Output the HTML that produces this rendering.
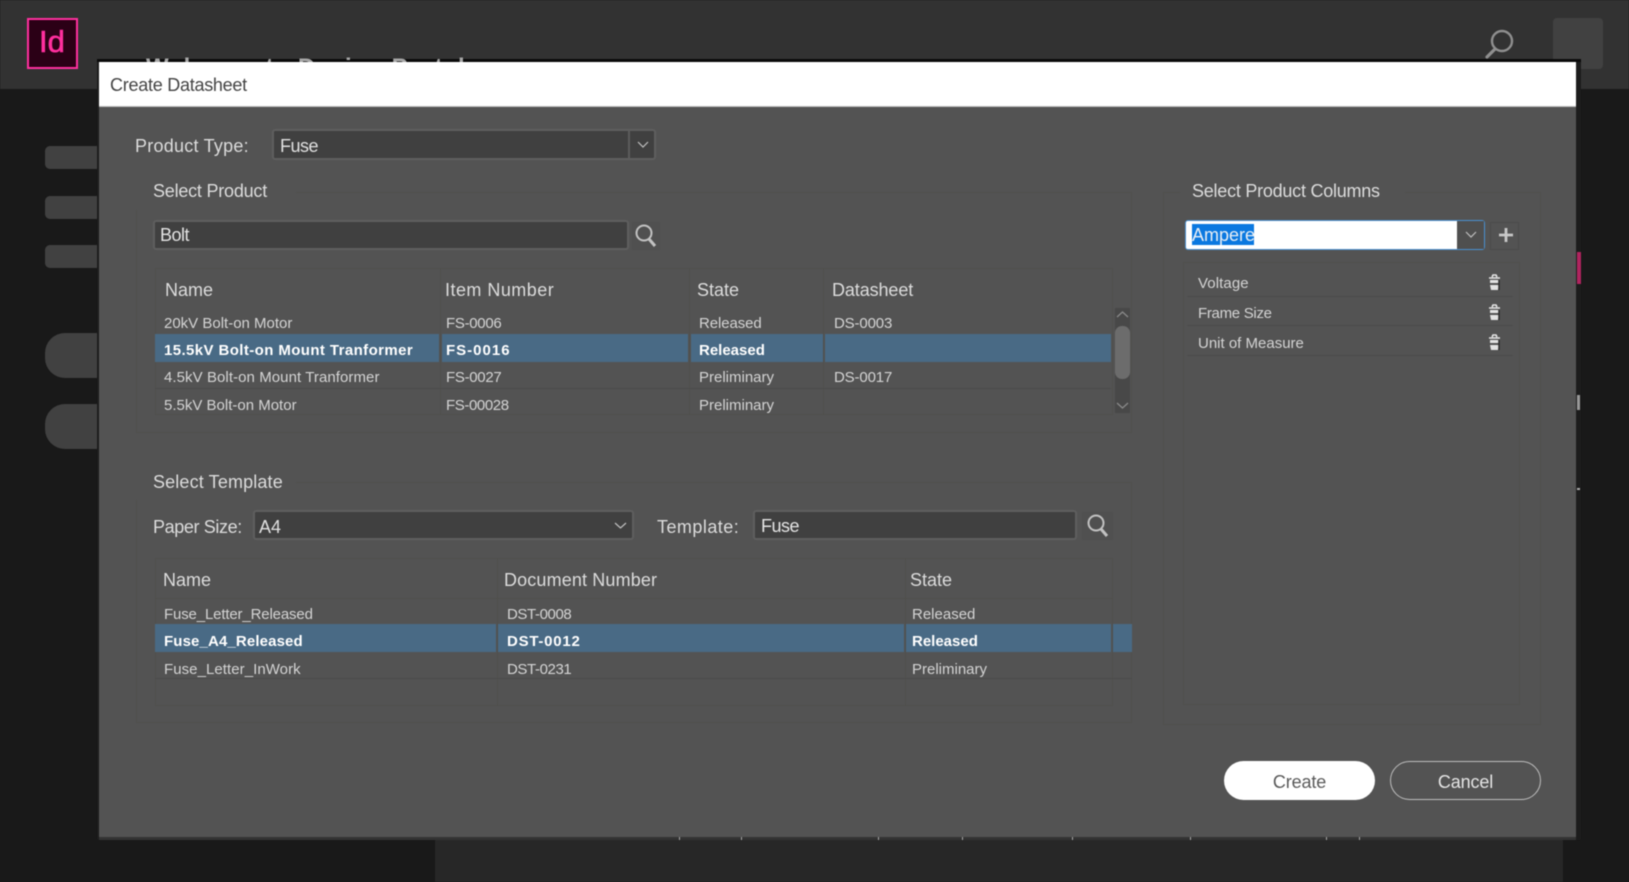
<!DOCTYPE html>
<html>
<head>
<meta charset="utf-8">
<style>
html,body{margin:0;padding:0;width:1629px;height:882px;overflow:hidden;background:#191919}
body{position:relative;font-family:"Liberation Sans",sans-serif}
#wrap{position:absolute;left:0;top:0;width:1629px;height:882px;overflow:hidden;filter:blur(.4px)}
.b{position:absolute;box-sizing:border-box}
.t{position:absolute;white-space:nowrap;height:24px;line-height:24px;color:#dcdcdc;font-size:18px;transform-origin:left center}
.s{font-size:15px;color:#d4d4d4}
.w{font-size:15px;font-weight:bold;color:#fff}
.sel{position:absolute;height:28px;background:#496a85}
.input{position:absolute;box-sizing:border-box;background:#404040;border:2px solid #5e5e5e;border-radius:3px;height:30px}
.ln{position:absolute;height:1px;background:#4b4b4b}
.v{position:absolute;width:1px;background:#4f4f4c}
.g{position:absolute;box-sizing:border-box;border:1px solid #50504d}
.k{position:absolute;top:837px;width:1px;height:3px;background:#aaa}
svg{position:absolute;overflow:visible}
</style>
</head>
<body>
<div id="wrap">
<!-- background -->
<div class="b" style="left:0;top:0;width:1629px;height:89px;background:#323232"></div>
<div class="b" style="left:435px;top:838px;width:1128px;height:44px;background:#272727"></div>
<div class="b" style="left:27px;top:18px;width:51px;height:51px;background:#2b0016;border:2px solid #ff2f9e"></div>
<div class="t" style="left:39px;top:30px;font-size:31px;color:#ff2f9e;-webkit-text-stroke:.6px #ff2f9e">Id</div>
<svg style="left:0;top:0" width="1629" height="100"><circle cx="1502" cy="41" r="10" fill="none" stroke="#8f8f8f" stroke-width="2.4"/><path d="M1495 49L1487 57" stroke="#8f8f8f" stroke-width="3.2" stroke-linecap="round"/></svg>
<div class="b" style="left:1553px;top:18px;width:50px;height:51px;background:#414141;border-radius:4px"></div>
<div class="b" style="left:45px;top:146px;width:60px;height:23px;background:#414141;border-radius:5px"></div>
<div class="b" style="left:45px;top:196px;width:60px;height:23px;background:#414141;border-radius:5px"></div>
<div class="b" style="left:45px;top:245px;width:60px;height:23px;background:#414141;border-radius:5px"></div>
<div class="b" style="left:45px;top:333px;width:60px;height:45px;background:#414141;border-radius:20px 0 0 20px"></div>
<div class="b" style="left:45px;top:404px;width:60px;height:45px;background:#414141;border-radius:20px 0 0 20px"></div>
<!-- dialog shell -->
<div class="b" style="left:97px;top:60px;width:1484px;height:780px;background:#1c1c1c"></div>
<div class="b" style="left:97px;top:59px;width:1484px;height:3px;background:#0a0a0a"></div>
<div class="t" style="left:146px;top:56px;font-size:24px;font-weight:bold;color:#a8a8a8;letter-spacing:1px">Welcome to Design Portal</div>
<div class="b" style="left:1577px;top:252px;width:4px;height:32px;background:#b0245f"></div>
<div class="b" style="left:1577px;top:395px;width:3px;height:15px;background:#999"></div>
<div class="b" style="left:1577px;top:488px;width:3px;height:2px;background:#aaa"></div>
<div class="b" style="left:99px;top:833px;width:1477px;height:7px;background:#333"></div>
<div class="b" style="left:99px;top:62px;width:1477px;height:775px;background:#535353"></div>
<div class="b" style="left:99px;top:62px;width:1477px;height:45px;background:#fff;border-bottom:1px solid #bbb"></div>
<div class="t" style="left:110px;top:73px;color:#444;font-size:18px;letter-spacing:-.26px">Create Datasheet</div>
<div class="k" style="left:679px"></div><div class="k" style="left:741px"></div><div class="k" style="left:878px"></div><div class="k" style="left:962px"></div><div class="k" style="left:1072px"></div><div class="k" style="left:1190px"></div><div class="k" style="left:1326px"></div><div class="k" style="left:1359px"></div>

<!-- group boxes -->
<div class="g" style="left:136px;top:192px;width:996px;height:241px"></div>
<div class="g" style="left:136px;top:482px;width:996px;height:241px"></div>
<div class="g" style="left:1163px;top:192px;width:378px;height:533px"></div>
<div class="g" style="left:155px;top:268px;width:958px;height:147px"></div>
<div class="g" style="left:155px;top:558px;width:958px;height:148px"></div>
<div class="g" style="left:1183px;top:262px;width:337px;height:443px"></div>
<div class="b" style="left:136px;top:170px;width:160px;height:40px;background:#535353"></div>
<div class="b" style="left:136px;top:470px;width:160px;height:30px;background:#535353"></div>
<div class="b" style="left:1180px;top:170px;width:225px;height:40px;background:#535353"></div>

<!-- product type -->
<div class="t" style="left:135px;top:134px;letter-spacing:.24px">Product Type:</div>
<div class="input" style="left:272px;top:129px;width:384px;height:31px"></div>
<div class="b" style="left:628px;top:131px;width:2px;height:27px;background:#5c5c5c"></div>
<div class="t" style="left:280px;top:134px;color:#e0e0e0;letter-spacing:-.5px">Fuse</div>
<svg style="left:637px;top:141px" width="12" height="7"><path d="M1 1L6 6L11 1" fill="none" stroke="#c0c0c0" stroke-width="1.2"/></svg>

<!-- select product -->
<div class="t" style="left:153px;top:179px;letter-spacing:-.22px">Select Product</div>
<div class="input" style="left:153px;top:220px;width:476px"></div>
<div class="t" style="left:160px;top:223px;color:#e4e4e4;letter-spacing:-.5px">Bolt</div>
<div class="b" style="left:632px;top:222px;width:28px;height:28px;background:#505050"></div>
<svg style="left:632px;top:222px" width="28" height="28"><circle cx="12" cy="11" r="7.5" fill="none" stroke="#c2c2c2" stroke-width="2"/><path d="M17 17L23 24" stroke="#c2c2c2" stroke-width="3"/></svg>

<!-- table 1 -->
<div class="v" style="left:440px;top:268px;height:147px"></div>
<div class="v" style="left:689px;top:268px;height:147px"></div>
<div class="v" style="left:823px;top:268px;height:147px"></div>
<div class="t" style="left:165px;top:278px">Name</div>
<div class="t" style="left:445px;top:278px;letter-spacing:.47px">Item Number</div>
<div class="t" style="left:697px;top:278px">State</div>
<div class="t" style="left:832px;top:278px;letter-spacing:-.1px">Datasheet</div>
<div class="sel" style="left:155px;top:334px;width:284px"></div>
<div class="sel" style="left:442px;top:334px;width:246px"></div>
<div class="sel" style="left:691px;top:334px;width:132px"></div>
<div class="sel" style="left:825px;top:334px;width:286px"></div>
<div class="ln" style="left:155px;top:388px;width:956px"></div>
<div class="ln" style="left:155px;top:414px;width:956px;background:#4f4f4c"></div>

<div class="t s" style="left:164px;top:312px">20kV Bolt-on Motor</div>
<div class="t s" style="left:446px;top:312px;letter-spacing:-.3px">FS-0006</div>
<div class="t s" style="left:699px;top:312px;letter-spacing:-.1px">Released</div>
<div class="t s" style="left:834px;top:312px;letter-spacing:-.15px">DS-0003</div>
<div class="t w" style="left:164px;top:339px;letter-spacing:.4px">15.5kV Bolt-on Mount Tranformer</div>
<div class="t w" style="left:446px;top:339px;letter-spacing:1px">FS-0016</div>
<div class="t w" style="left:699px;top:339px">Released</div>
<div class="t s" style="left:164px;top:366px;letter-spacing:.07px">4.5kV Bolt-on Mount Tranformer</div>
<div class="t s" style="left:446px;top:366px;letter-spacing:-.3px">FS-0027</div>
<div class="t s" style="left:699px;top:366px">Preliminary</div>
<div class="t s" style="left:834px;top:366px;letter-spacing:-.15px">DS-0017</div>
<div class="t s" style="left:164px;top:394px">5.5kV Bolt-on Motor</div>
<div class="t s" style="left:446px;top:394px;letter-spacing:-.4px">FS-00028</div>
<div class="t s" style="left:699px;top:394px">Preliminary</div>

<!-- scrollbar -->
<div class="b" style="left:1115px;top:308px;width:15px;height:105px;background:#484848"></div>
<div class="b" style="left:1115px;top:326px;width:15px;height:53px;background:#6c6c6c;border-radius:7px"></div>
<svg style="left:1116px;top:311px" width="13" height="8"><path d="M1 6L6.5 1L12 6" fill="none" stroke="#8a8a8a" stroke-width="1.3"/></svg>
<svg style="left:1116px;top:402px" width="13" height="8"><path d="M1 1L6.5 6L12 1" fill="none" stroke="#8a8a8a" stroke-width="1.3"/></svg>

<!-- select template -->
<div class="t" style="left:153px;top:470px;letter-spacing:.14px">Select Template</div>
<div class="t" style="left:153px;top:515px;letter-spacing:-.38px">Paper Size:</div>
<div class="input" style="left:253px;top:510px;width:381px"></div>
<div class="t" style="left:259px;top:515px;color:#e0e0e0">A4</div>
<svg style="left:614px;top:522px" width="13" height="7"><path d="M1 1L6.5 6L12 1" fill="none" stroke="#c0c0c0" stroke-width="1.2"/></svg>
<div class="t" style="left:657px;top:515px;letter-spacing:.46px">Template:</div>
<div class="input" style="left:753px;top:510px;width:324px"></div>
<div class="t" style="left:761px;top:514px;color:#e4e4e4;letter-spacing:-.5px">Fuse</div>
<div class="b" style="left:1082px;top:512px;width:31px;height:28px;background:#505050"></div>
<svg style="left:1085px;top:512px" width="28" height="28"><circle cx="11" cy="11" r="7.5" fill="none" stroke="#c2c2c2" stroke-width="2"/><path d="M16 17L22 24" stroke="#c2c2c2" stroke-width="3"/></svg>

<!-- table 2 -->
<div class="v" style="left:497px;top:558px;height:148px"></div>
<div class="v" style="left:905px;top:558px;height:148px"></div>
<div class="v" style="left:1112px;top:558px;height:148px"></div>
<div class="ln" style="left:155px;top:598px;width:958px;background:#4f4f4c"></div>
<div class="t" style="left:163px;top:568px">Name</div>
<div class="t" style="left:504px;top:568px;letter-spacing:.14px">Document Number</div>
<div class="t" style="left:910px;top:568px">State</div>
<div class="sel" style="left:155px;top:624px;width:341px"></div>
<div class="sel" style="left:498px;top:624px;width:406px"></div>
<div class="sel" style="left:906px;top:624px;width:205px"></div>
<div class="sel" style="left:1113px;top:624px;width:19px"></div>
<div class="ln" style="left:155px;top:678px;width:977px"></div>
<div class="t s" style="left:164px;top:603px;letter-spacing:-.15px">Fuse_Letter_Released</div>
<div class="t s" style="left:507px;top:603px;letter-spacing:-.4px">DST-0008</div>
<div class="t s" style="left:912px;top:603px">Released</div>
<div class="t w" style="left:164px;top:630px;letter-spacing:.13px">Fuse_A4_Released</div>
<div class="t w" style="left:507px;top:630px;letter-spacing:.75px">DST-0012</div>
<div class="t w" style="left:912px;top:630px">Released</div>
<div class="t s" style="left:164px;top:658px;letter-spacing:.06px">Fuse_Letter_InWork</div>
<div class="t s" style="left:507px;top:658px;letter-spacing:-.4px">DST-0231</div>
<div class="t s" style="left:912px;top:658px">Preliminary</div>

<!-- right panel -->
<div class="t" style="left:1192px;top:179px;letter-spacing:-.24px">Select Product Columns</div>
<div class="b" style="left:1185px;top:220px;width:300px;height:30px;background:#fff;border:1px solid #4a90d0;border-radius:3px"></div>
<div class="b" style="left:1457px;top:221px;width:27px;height:28px;background:#4f4f4f"></div>
<svg style="left:1465px;top:231px" width="12" height="7"><path d="M1 1L6 6L11 1" fill="none" stroke="#c0c0c0" stroke-width="1.2"/></svg>
<div class="b" style="left:1192px;top:224px;width:62px;height:21px;background:#0a78e0"></div>
<div class="t" style="left:1192px;top:223px;color:#e8eef5">Ampere</div>
<div class="b" style="left:1490px;top:222px;width:29px;height:28px;border:1px solid #4b4b4b"></div>
<svg style="left:1499px;top:228px" width="14" height="14"><path d="M7 0V14M0 7H14" stroke="#c8c8c8" stroke-width="2.8"/></svg>
<div class="t s" style="left:1198px;top:272px;letter-spacing:.1px">Voltage</div>
<div class="t s" style="left:1198px;top:302px;letter-spacing:-.3px">Frame Size</div>
<div class="t s" style="left:1198px;top:332px">Unit of Measure</div>
<div class="ln" style="left:1187px;top:296px;width:326px"></div>
<div class="ln" style="left:1187px;top:325px;width:326px"></div>
<div class="ln" style="left:1187px;top:355px;width:326px"></div>
<svg style="left:1487px;top:275px" width="15" height="16"><path d="M2 3H13M5 2L6 0H9L10 2" fill="none" stroke="#e8e8e8" stroke-width="1.6"/><path d="M3 5H12V8H3ZM3 10H12L11 15H4Z" fill="#e4e4e4"/><path d="M12 5V15" stroke="#2e2e2e" stroke-width="1.5"/></svg>
<svg style="left:1487px;top:305px" width="15" height="16"><path d="M2 3H13M5 2L6 0H9L10 2" fill="none" stroke="#e8e8e8" stroke-width="1.6"/><path d="M3 5H12V8H3ZM3 10H12L11 15H4Z" fill="#e4e4e4"/><path d="M12 5V15" stroke="#2e2e2e" stroke-width="1.5"/></svg>
<svg style="left:1487px;top:335px" width="15" height="16"><path d="M2 3H13M5 2L6 0H9L10 2" fill="none" stroke="#e8e8e8" stroke-width="1.6"/><path d="M3 5H12V8H3ZM3 10H12L11 15H4Z" fill="#e4e4e4"/><path d="M12 5V15" stroke="#2e2e2e" stroke-width="1.5"/></svg>

<!-- buttons -->
<div class="b" style="left:1224px;top:761px;width:151px;height:39px;background:#fff;border-radius:20px"></div>
<div class="t" style="left:1224px;top:770px;width:151px;text-align:center;color:#5a5a5a;letter-spacing:-.15px">Create</div>
<div class="b" style="left:1390px;top:761px;width:151px;height:39px;border:1.5px solid #bdbdbd;border-radius:20px"></div>
<div class="t" style="left:1390px;top:770px;width:151px;text-align:center;color:#e4e4e4;letter-spacing:-.15px">Cancel</div>
</div>
</body>
</html>
